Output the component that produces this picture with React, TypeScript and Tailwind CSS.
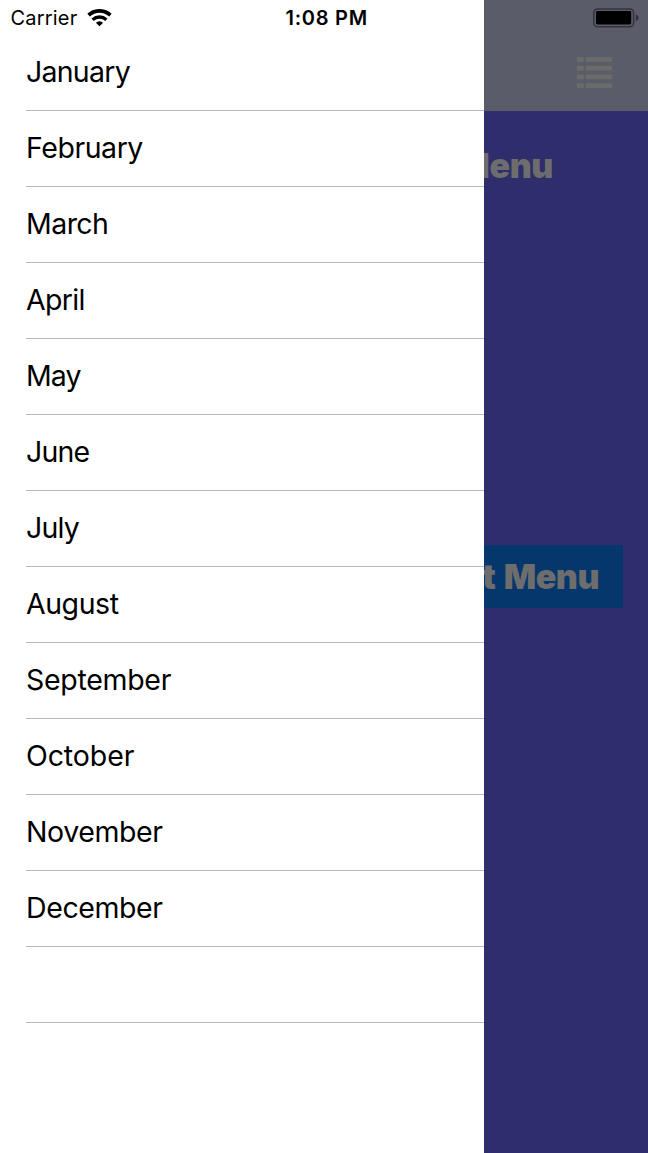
const rows = [
  { label: 'January', spacing: 'tracking-[-0.75px]' },
  { label: 'February', spacing: 'tracking-[-0.45px]' },
  { label: 'March', spacing: 'tracking-[-0.55px]' },
  { label: 'April', spacing: 'tracking-[-0.7px]' },
  { label: 'May', spacing: 'tracking-[-0.9px]' },
  { label: 'June', spacing: 'tracking-[-0.8px]' },
  { label: 'July', spacing: 'tracking-[-0.8px]' },
  { label: 'August', spacing: 'tracking-[-0.45px]' },
  { label: 'September', spacing: 'tracking-[-0.3px]' },
  { label: 'October', spacing: 'tracking-[-0.1px]' },
  { label: 'November', spacing: 'tracking-[-0.4px]' },
  { label: 'December', spacing: 'tracking-[-0.4px]' },
  { label: '', spacing: '' },
];

function WifiIcon() {
  return (
    <svg width="25" height="18" viewBox="0 0 25 18" fill="none" stroke="#000" strokeWidth="3.7">
      <path d="M1.6 6.1 C7.8 0.4 17.2 0.4 23.4 6.1" />
      <path d="M5.6 10.7 C9.6 7.1 15.4 7.1 19.4 10.7" strokeWidth="3.3" />
      <path d="M12.5 17.3 L8.9 13.8 Q12.5 10.8 16.1 13.8 Z" fill="#000" stroke="none" />
    </svg>
  );
}

function BatteryIcon() {
  return (
    <svg width="46" height="20" viewBox="0 0 46 20">
      <rect x="0.8" y="0.9" width="39.8" height="17.9" rx="3.8" fill="none" stroke="#32333c" strokeWidth="1.5" />
      <rect x="3" y="3.1" width="35.2" height="13.4" rx="1.4" fill="#000" />
      <path d="M42.8 6.2 Q45.8 7.3 45.8 9.8 Q45.8 12.3 42.8 13.4 Z" fill="#32333c" />
    </svg>
  );
}

function ListIcon() {
  return (
    <svg width="35" height="32" viewBox="0 0 35 32" fill="#6b6b69">
      {[1.2, 9.9, 18.6, 27.3].map((y) => (
        <g key={y}>
          <rect x="0" y={y} width="6.8" height="4.6" />
          <rect x="8.7" y={y} width="26.3" height="4.6" />
        </g>
      ))}
    </svg>
  );
}

export default function App() {
  return (
    <div className="flex h-[1153px] w-[648px] overflow-hidden bg-[#2f2d6c] font-['Inter',sans-serif] text-black">
      <aside className="flex w-[484px] shrink-0 flex-col bg-white">
        <header className="flex h-[35px] shrink-0 items-center">
          <div className="flex w-[285.5px] items-center pl-[10.5px]">
            <span className="w-[76.5px] text-[20px] leading-[36px] tracking-[0.2px] whitespace-nowrap">Carrier</span>
            <WifiIcon />
          </div>
          <span className="text-[20px] leading-[36px] font-semibold tracking-[0.75px] whitespace-nowrap">1:08 PM</span>
        </header>
        <ul className="flex flex-col pl-[26px]">
          {rows.map((row, i) => (
            <li key={i} className="flex h-[76px] items-center border-b border-[#bab9c0] pb-[2px]">
              <span className={`text-[28.5px] leading-[36px] ${row.spacing}`}>{row.label}</span>
            </li>
          ))}
        </ul>
      </aside>
      <main className="flex min-w-0 flex-1 flex-col overflow-hidden">
        <header className="flex h-[111px] shrink-0 flex-col items-end bg-[#5b5c69] pt-2">
          <div className="mr-[9px] h-[20px]">
            <BatteryIcon />
          </div>
          <div className="mt-[28px] mr-[36px]">
            <ListIcon />
          </div>
        </header>
        <h1 className="mt-[33px] mr-[95px] flex h-[42px] items-center justify-end text-[34px] font-black tracking-[-0.4px] whitespace-nowrap text-[#6d6d6d]">
          Menu
        </h1>
        <button className="mt-[359px] mr-[25px] flex h-[63px] items-center justify-end bg-[#05366c] pr-[24px] text-[34px] font-black tracking-[-0.5px] [word-spacing:2px] whitespace-nowrap text-[#6d6d6d]">
          t Menu
        </button>
      </main>
    </div>
  );
}
